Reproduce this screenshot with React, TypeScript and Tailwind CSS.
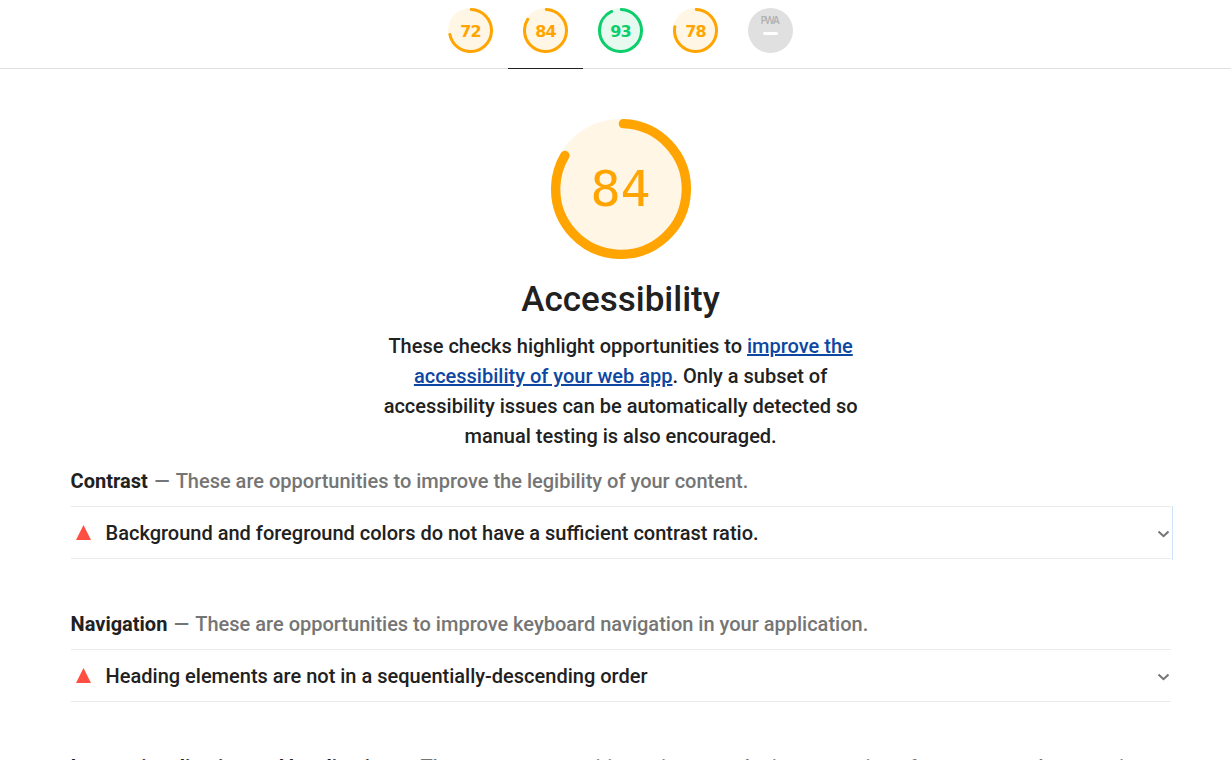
import React from "react";

type Tone = "average" | "pass";

const tones: Record<Tone, { arc: string; fill: string; text: string }> = {
  average: { arc: "stroke-[#ffa400]", fill: "fill-[#fff6e5] stroke-[#fff6e5]", text: "text-[#ffa400]" },
  pass: { arc: "stroke-[#0cce6b]", fill: "fill-[#e6faf0] stroke-[#e6faf0]", text: "text-[#0cce6b]" },
};

function Gauge({ score, tone, big = false }: { score: number; tone: Tone; big?: boolean }) {
  const t = tones[tone];
  const length = (score / 100) * 2 * Math.PI * 56 - 4;
  return (
    <div className={`grid place-items-center ${big ? "h-[140px] w-[140px]" : "h-[45px] w-[45px]"}`}>
      <svg viewBox="0 0 120 120" className="col-start-1 row-start-1 h-full w-full">
        <circle cx="60" cy="60" r="56" strokeWidth="8" className={t.fill} />
        <circle
          cx="60" cy="60" r="56" fill="none" strokeWidth="8" strokeLinecap="round"
          strokeDasharray={`${length} 352`} transform="rotate(-87.9 60 60)" className={t.arc}
        />
      </svg>
      <span
        className={`col-start-1 row-start-1 leading-none ${t.text} ${
          big
            ? "font-['DejaVu_Sans_Mono',monospace] text-[50px] font-normal"
            : "pt-[2px] font-['DejaVu_Sans',sans-serif] text-[16px] font-bold tracking-[-0.8px]"
        }`}
      >
        {score}
      </span>
    </div>
  );
}

function PwaGauge() {
  return (
    <svg viewBox="0 0 45 45" className="h-[45px] w-[45px]">
      <circle cx="22.5" cy="22.5" r="22.5" fill="#e0e0e0" />
      <text x="12.5" y="16" fontSize="10" fontWeight="600" textLength="19" lengthAdjust="spacing" fill="#b0b0b0" className="font-['Open_Sans',sans-serif]">PWA</text>
      <rect x="15" y="24" width="15" height="3" rx="1.5" fill="#fff" />
    </svg>
  );
}

function Group({ title, description, children }: { title: string; description: string; children?: React.ReactNode }) {
  return (
    <section className="mb-[50px]">
      <h2 className="mb-[10px] text-[#757575]">
        <span className="font-bold text-[#212121]">{title}</span> <span className="mx-[1.5px]">—</span> {description}
      </h2>
      {children}
    </section>
  );
}

function Audit({ title, focused = false }: { title: string; focused?: boolean }) {
  return (
    <div className="relative flex h-[53px] items-center border-y border-[#ebebeb] pr-[1.5px] pl-[5px]">
      <svg viewBox="0 0 15 15" className="h-[15px] w-[15px]">
        <path d="M7.5 0 15 15H0Z" fill="#ff4e42" />
      </svg>
      <span className="ml-[15px] grow">{title}</span>
      <svg viewBox="-0.5 0 12 8" className="mt-[2px] h-[8px] w-[12px]">
        <path d="m1 1.5 5 4.7 5-4.7" fill="none" stroke="#757575" strokeWidth="2" />
      </svg>
      {focused && <span className="absolute -top-px -right-[2px] h-[54px] w-px bg-[#cfe3fa]" />}
    </div>
  );
}

export default function App() {
  return (
    <div className="h-[760px] overflow-hidden bg-white font-['Roboto',sans-serif] text-[20px] leading-[30px] font-medium text-[#212121]">
      <header className="flex h-[69px] justify-center border-b border-[#e0e0e0] pl-[10px]">
        <div className="flex w-[75px] justify-center pt-2"><Gauge score={72} tone="average" /></div>
        <div className="-mb-px flex w-[75px] justify-center border-b border-[#212121] pt-2"><Gauge score={84} tone="average" /></div>
        <div className="flex w-[75px] justify-center pt-2"><Gauge score={93} tone="pass" /></div>
        <div className="flex w-[75px] justify-center pt-2"><Gauge score={78} tone="average" /></div>
        <div className="flex w-[75px] justify-center pt-2"><PwaGauge /></div>
      </header>
      <main className="ml-[70.6px] w-[1100px]">
        <div className="flex flex-col items-center pt-[50px] pb-[15px]">
          <Gauge score={84} tone="average" big />
          <h1 className="mt-[21px] text-[35px] leading-[40px]">Accessibility</h1>
          <p className="mt-[11px] w-[500px] text-center">
            These checks highlight opportunities to{" "}
            <a href="#" className="text-[#0d47a1] underline">improve the accessibility of your web app</a>. Only a
            subset of accessibility issues can be automatically detected so manual testing is also encouraged.
          </p>
        </div>
        <Group title="Contrast" description="These are opportunities to improve the legibility of your content.">
          <Audit title="Background and foreground colors do not have a sufficient contrast ratio." focused />
        </Group>
        <Group title="Navigation" description="These are opportunities to improve keyboard navigation in your application.">
          <Audit title="Heading elements are not in a sequentially-descending order" />
        </Group>
        <Group
          title="Internationalization and localization"
          description="These are opportunities to improve the interpretation of your content by users in different locales."
        />
      </main>
    </div>
  );
}
